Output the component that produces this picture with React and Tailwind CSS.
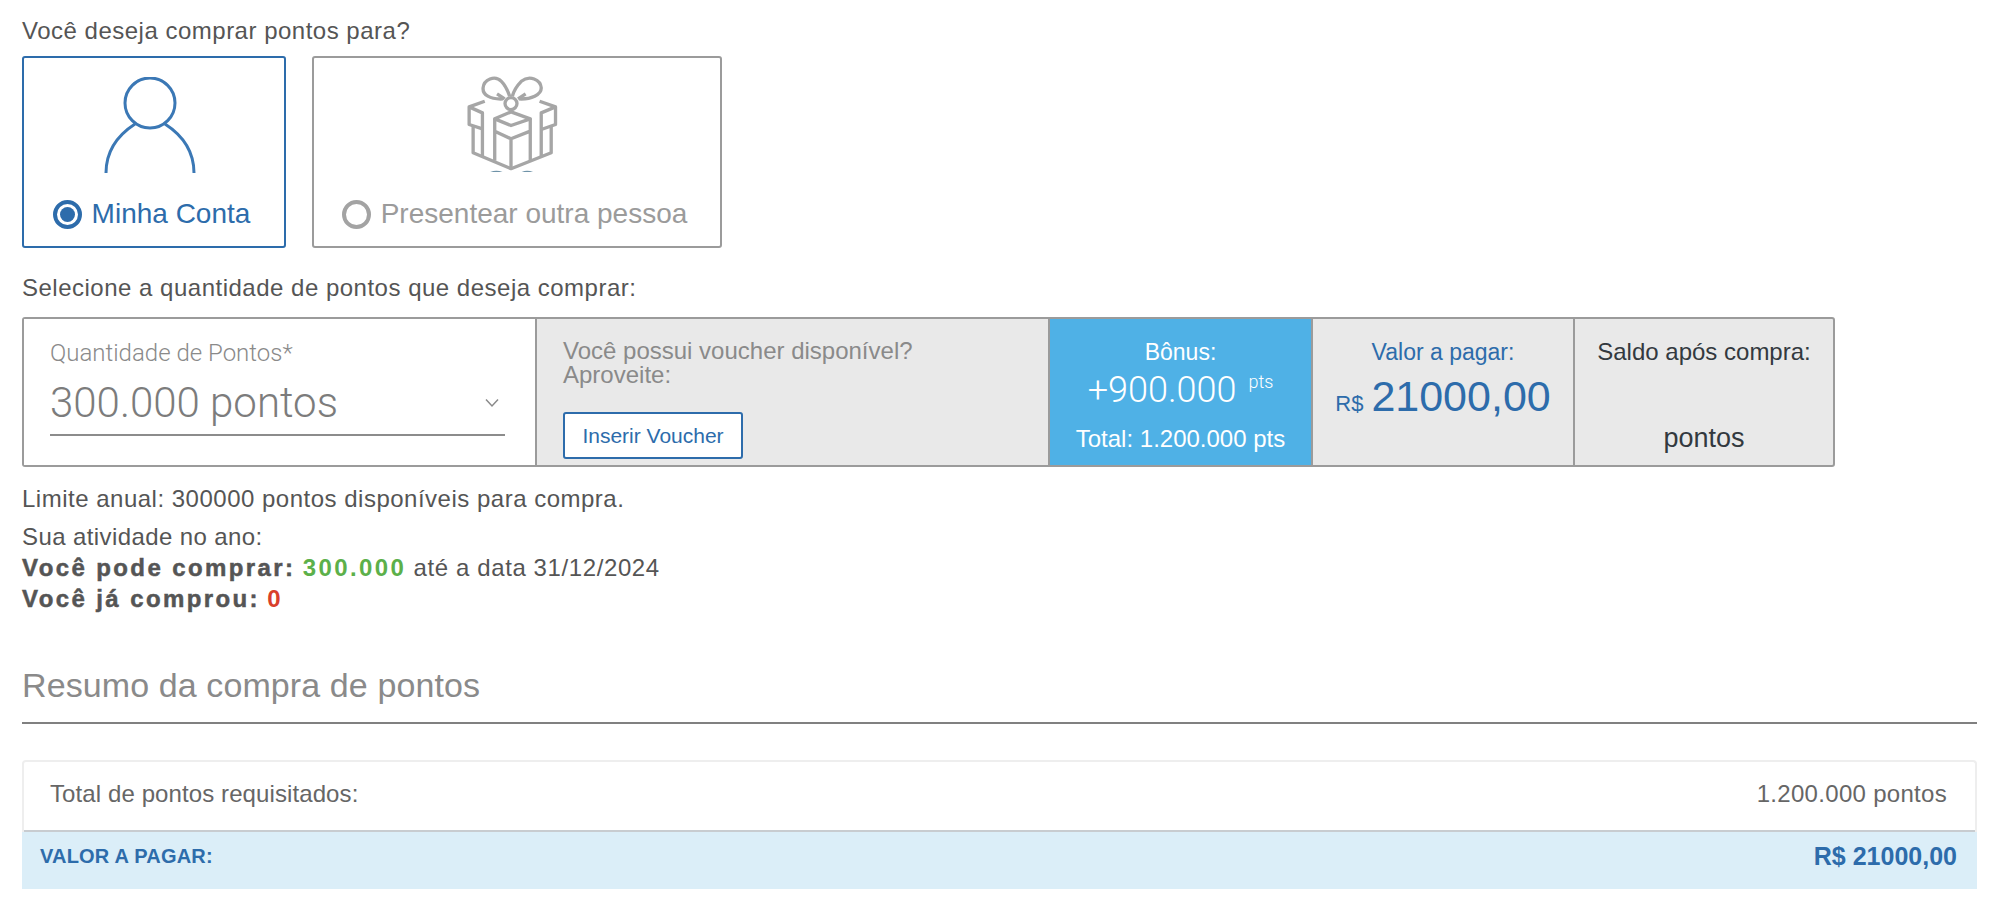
const Person = () => (
  <svg className="mr-[8px]" width="100" height="96" viewBox="0 0 100 96" fill="none" stroke="#3b78b5" strokeWidth="3">
    <circle cx="50" cy="26" r="25" />
    <path d="M6 96 C6 74 18 58 35 47" />
    <path d="M65 47 C82 58 94 74 94 96" />
  </svg>
);

const Gift = () => (
  <svg className="mr-[12px] -mt-[4px]" width="96" height="99" viewBox="70 40 288 298" fill="none" stroke="#a6a6a6" strokeWidth="10" strokeLinejoin="round">
    <path d="M190 118 C150 120 128 105 130 85 C132 60 165 45 185 65 C198 78 205 95 210 110" />
    <path d="M238 118 C275 120 305 105 305 85 C303 60 270 45 245 65 C232 78 222 95 218 110" />
    <circle cx="214" cy="132" r="18" />
    <path d="M172 103 L195 118 M258 103 L235 118" />
    <path d="M135 125 L88 142 L88 195 L128 208 M300 125 L348 142 L348 195 L305 210" />
    <path d="M88 142 L128 160 L128 290 M348 142 L305 160 L305 290" />
    <path d="M100 197 L100 280 L214 328 L335 280 L335 197" />
    <path d="M165 178 L214 157 L272 178 L214 198 Z" />
    <path d="M165 178 L165 304 M272 178 L272 304 M165 215 L214 238 L272 215 M214 238 L214 328" />
    <path d="M150 342 Q170 332 190 342 M245 342 Q262 332 282 342" stroke="#6f93a8" strokeWidth="6" />
  </svg>
);

const Radio = ({ checked }) => (
  <span className={`mr-[10px] flex h-[29px] w-[29px] shrink-0 items-center justify-center rounded-full border-[4px] ${checked ? "border-[#2d6cab]" : "border-[#a3a3a3]"}`}>
    {checked && <span className="h-[15px] w-[15px] rounded-full bg-[#2d6cab]"></span>}
  </span>
);

const OptionCard = ({ width, icon, label, checked }) => (
  <div className={`flex h-[192px] flex-col items-center rounded-[3px] border-2 bg-white ${width} ${checked ? "border-[#2d6cab] text-[#2d6cab]" : "border-[#9b9b9b] text-[#9b9b9b]"}`}>
    <div className="mt-[19px] flex h-[96px] justify-center">{icon}</div>
    <div className="mt-[25px] flex items-center pr-[5px] text-[28px] leading-[32px] tracking-normal">
      <Radio checked={checked} />
      {label}
    </div>
  </div>
);

export default function App() {
  return (
    <div className="h-[908px] overflow-hidden bg-white pl-[22px] pr-[19px] text-[24px] tracking-[0.3px] text-[#555555] [font-family:'Liberation_Sans',Arial,sans-serif]">
      <p className="pt-[18px] leading-[26px] tracking-[0.5px]">Você deseja comprar pontos para?</p>

      <div className="mt-[12px] flex gap-[26px]">
        <OptionCard width="w-[264px]" icon={<Person />} label="Minha Conta" checked />
        <OptionCard width="w-[410px]" icon={<Gift />} label="Presentear outra pessoa" />
      </div>

      <p className="mt-[27px] leading-[26px] tracking-[0.5px]">Selecione a quantidade de pontos que deseja comprar:</p>

      <div className="mt-[16px] flex h-[150px] w-[1813px] rounded-[3px] border-2 border-[#9b9b9b] bg-[#e9e9e9]">
        <div className="w-[511px] bg-white pl-[26px] pr-[30px] pt-[20px]">
          <p className="text-[24px] leading-[28px] tracking-normal text-[#8a8a8a] [font-family:Roboto,sans-serif] font-light">Quantidade de Pontos*</p>
          <div className="mt-[7px] flex h-[62px] items-center justify-between border-b-2 border-[#8c8c8c] pb-[2px] pr-[6px]">
            <span className="text-[42px] leading-[48px] tracking-normal text-[#7c7c7c] [font-family:Roboto,sans-serif] font-light">300.000 pontos</span>
            <svg width="14" height="10" viewBox="0 0 14 10" fill="none" stroke="#8a8a8a" strokeWidth="1.5"><path d="M1 1.5 L7 8 L13 1.5" /></svg>
          </div>
        </div>
        <div className="w-[513px] border-l-2 border-[#9b9b9b] pl-[26px] pt-[20px] tracking-normal text-[#8a8a8a]">
          <p className="leading-[24px]">Você possui voucher disponível?</p>
          <p className="leading-[24px]">Aproveite:</p>
          <button className="mt-[25px] h-[47px] w-[180px] rounded-[3px] border-2 border-[#2d6cab] bg-white text-[21px] text-[#2d6cab]">Inserir Voucher</button>
        </div>
        <div className="flex w-[263px] flex-col items-center border-l-2 border-[#9b9b9b] bg-[#4fb1e6] pt-[20px] tracking-normal text-white">
          <p className="text-[23px] leading-[26px]">Bônus:</p>
          <p className="mt-[5px] flex h-[40px] items-start [font-family:Roboto,sans-serif] font-light">
            <span className="text-[36px] leading-[40px]">+900.000</span>
            <span className="ml-[12px] text-[18px] leading-[24px]">pts</span>
          </p>
          <p className="mt-[16px] text-[24px] leading-[26px]">Total: 1.200.000 pts</p>
        </div>
        <div className="flex w-[262px] flex-col items-center border-l-2 border-[#9b9b9b] pt-[20px] tracking-normal text-[#2d6cab]">
          <p className="text-[23px] leading-[26px]">Valor a pagar:</p>
          <p className="mt-[6px] flex items-baseline">
            <span className="mr-[8px] text-[22px]">R$</span>
            <span className="text-[43px] leading-[50px]">21000,00</span>
          </p>
        </div>
        <div className="flex flex-1 flex-col items-center border-l-2 border-[#9b9b9b] pt-[20px] tracking-normal text-[#33393f]">
          <p className="text-[24px] leading-[26px]">Saldo após compra:</p>
          <p className="mt-[58px] text-[27px] leading-[30px]">pontos</p>
        </div>
      </div>

      <p className="mt-[19px] leading-[26px] tracking-[0.5px]">Limite anual: 300000 pontos disponíveis para compra.</p>
      <div className="mt-[9px] leading-[31px] tracking-[0.6px]">
        <p className="tracking-[0.4px]">Sua atividade no ano:</p>
        <p>
          <b className="tracking-[2.4px] [-webkit-text-stroke:0.5px_#555555]">Você pode comprar:</b> <b className="tracking-[2.4px] text-[#5cb04a]">300.000</b> até a data 31/12/2024
        </p>
        <p>
          <b className="tracking-[2.4px] [-webkit-text-stroke:0.5px_#555555]">Você já comprou:</b> <b className="text-[#d9402b]">0</b>
        </p>
      </div>

      <h2 className="mt-[52px] text-[34px] leading-[38px] tracking-[0.1px] text-[#8a8a8a]">Resumo da compra de pontos</h2>
      <div className="mt-[18px] border-b-2 border-[#808080]"></div>

      <div className="mt-[36px] rounded-t-[4px] border-2 border-b-0 border-[#eeeeee]">
        <div className="flex h-[70px] items-center justify-between border-b-2 border-[#c8ccd0] pb-[4px] pl-[26px] pr-[28px] text-[#666666]">
          <span className="tracking-[0.1px]">Total de pontos requisitados:</span>
          <span>1.200.000 pontos</span>
        </div>
      </div>
      <div className="flex h-[57px] items-start justify-between bg-[#dbeef8] pl-[18px] pr-[20px] pt-[10px] font-bold leading-[28px] tracking-normal text-[#2d6cab]">
        <span className="text-[20px] tracking-[0.2px]">VALOR A PAGAR:</span>
        <span className="text-[25px]">R$ 21000,00</span>
      </div>
    </div>
  );
}
